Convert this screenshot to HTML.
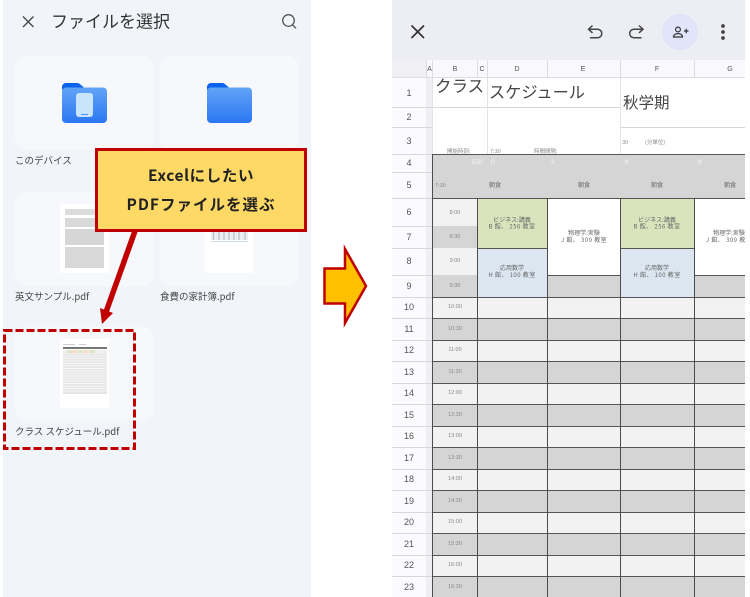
<!DOCTYPE html>
<html lang="ja">
<head>
<meta charset="utf-8">
<title>PDF to Excel</title>
<style>
html,body{margin:0;padding:0;background:#fff;width:750px;height:597px;overflow:hidden}
svg{display:block}
text{font-family:"Liberation Sans","Noto Sans CJK JP",sans-serif}
.j{font-family:"Noto Sans CJK JP","Liberation Sans",sans-serif}
.lb{font-size:9.5px;fill:#444;font-family:"Noto Sans CJK JP","Liberation Sans",sans-serif}
.rn{font-size:9px;fill:#555;text-anchor:middle}
.ch{font-size:7px;fill:#555;text-anchor:middle}
.t{font-size:5.5px;fill:#888;text-anchor:middle}
.c{font-size:6px;fill:#666;text-anchor:middle;font-family:"Noto Sans CJK JP","Liberation Sans",sans-serif}
.d{font-size:6px;fill:#666;text-anchor:middle;letter-spacing:.45px;font-family:"Noto Sans CJK JP","Liberation Sans",sans-serif}
.s{font-size:5.5px;fill:#888;font-family:"Noto Sans CJK JP","Liberation Sans",sans-serif}
</style>
</head>
<body>
<svg width="750" height="597" viewBox="0 0 750 597" xmlns="http://www.w3.org/2000/svg">
<defs>
<linearGradient id="fb" x1="0" y1="0" x2="0" y2="1"><stop offset="0" stop-color="#62a4f7"/><stop offset="1" stop-color="#2b77f2"/></linearGradient>
<clipPath id="sheet"><rect x="392" y="0" width="353" height="597"/></clipPath>
</defs>

<!-- LEFT PANEL -->
<rect x="3" y="0" width="308" height="597" fill="#f1f4f9"/>
<path d="M23 16.500L33.500 27M33.500 16.500L23 27" stroke="#444" stroke-width="1.300" fill="none"/>
<text x="51" y="27.500" class="j" font-size="17" fill="#333">ファイルを選択</text>
<circle cx="288.500" cy="20.500" r="5.800" stroke="#555" stroke-width="1.300" fill="none"/>
<path d="M292.800 25L296 28.300" stroke="#555" stroke-width="1.300"/>

<rect x="15" y="56" width="139" height="94" rx="11" fill="#f6f8fc"/>
<rect x="160" y="56" width="139" height="94" rx="11" fill="#f6f8fc"/>
<rect x="15" y="192" width="139" height="94" rx="11" fill="#f6f8fc"/>
<rect x="160" y="192" width="139" height="94" rx="11" fill="#f6f8fc"/>
<rect x="15" y="327" width="139" height="94" rx="11" fill="#f6f8fc"/>

<!-- folders -->
<path d="M62 87a4 4 0 0 1 4-4h11c2 0 3 1 4.500 2.500l2 1.500v3H62z" fill="#0b62ec"/>
<rect x="62" y="87.500" width="45" height="35.500" rx="4" fill="url(#fb)"/>
<rect x="76" y="93" width="17" height="24" rx="3" fill="#c9e4fd"/>
<rect x="81" y="114" width="7" height="1" fill="#4c8ff0"/>
<path d="M207 87a4 4 0 0 1 4-4h11c2 0 3 1 4.500 2.500l2 1.500v3H207z" fill="#0b62ec"/>
<rect x="207" y="87.500" width="45" height="35.500" rx="4" fill="url(#fb)"/>

<text x="15" y="164" class="lb">このデバイス</text>
<text x="15" y="300" class="lb">英文サンプル.pdf</text>
<text x="160" y="300" class="lb">食費の家計簿.pdf</text>
<text x="15" y="435" class="lb">クラス スケジュール.pdf</text>

<!-- thumb 1 -->
<rect x="60" y="204" width="49" height="69" fill="#fff"/>
<rect x="65" y="209" width="39" height="6" fill="#dcdcdc"/>
<rect x="65" y="218" width="39" height="9" fill="#d9d9d9"/>
<rect x="65" y="229" width="39" height="16" fill="#d6d6d6"/>
<rect x="65" y="247" width="39" height="21" fill="#d8d8d8"/>
<!-- thumb 2 -->
<rect x="205" y="225" width="48" height="48" fill="#fff"/>
<rect x="211" y="232" width="37" height="8" fill="#eceef0"/>
<path d="M213.500 232v8M219 232v8M224 232v8M229 232v8M234 232v8M239 232v8M245 232v8" stroke="#b8bec4" stroke-width="1.200"/>
<rect x="211" y="241" width="37" height="1" fill="#d0deea"/>
<!-- thumb 3 -->
<rect x="60" y="339" width="49" height="69" fill="#fff"/>
<rect x="63" y="344" width="12" height="1" fill="#ccc"/>
<rect x="79" y="344" width="7" height="1" fill="#ccc"/>
<rect x="63" y="347" width="44" height="2" fill="#777"/>
<rect x="63" y="350" width="44" height="4" fill="#f0f0f0"/>
<rect x="67" y="350" width="5" height="3" fill="#dbe7c6"/><rect x="72" y="350" width="5" height="3" fill="#f8dcc4"/><rect x="78" y="350" width="5" height="3" fill="#dbe7c6"/><rect x="84" y="350" width="5" height="3" fill="#f8dcc4"/><rect x="90" y="350" width="5" height="3" fill="#dbe7c6"/>
<rect x="63" y="354" width="44" height="40" fill="#e6e6e6"/>
<path d="M63 356h44M63 358.500h44M63 361h44M63 363.500h44M63 366h44M63 368.500h44M63 371h44M63 373.500h44M63 376h44M63 378.500h44M63 381h44M63 383.500h44M63 386h44M63 388.500h44M63 391h44" stroke="#f6f6f6" stroke-width="1"/>

<!-- RIGHT PANEL -->
<g clip-path="url(#sheet)">
<rect x="392" y="0" width="353" height="60" fill="#edeef4"/>
<rect x="392" y="60" width="353" height="18" fill="#f9f9fd"/>
<rect x="392" y="60" width="34" height="18" fill="#f0f0f4"/>
<rect x="392" y="78" width="34" height="519" fill="#fbfbfe"/>
<rect x="426" y="78" width="6" height="519" fill="#f0f0f2"/>
<rect x="432" y="78" width="313" height="76" fill="#fff"/>

<path d="M411.500 25.500L424 38M424 25.500L411.500 38" stroke="#333" stroke-width="1.700" fill="none"/>
<path d="M592.500 25.500l-4 3.700 4 3.700M588.500 29.200h9a4.300 4.300 0 0 1 0 8.600H590" stroke="#444" stroke-width="1.500" fill="none"/>
<path d="M639 25.500l4 3.700-4 3.700M643 29.200h-9a4.300 4.300 0 0 0 0 8.600h7.500" stroke="#444" stroke-width="1.500" fill="none"/>
<circle cx="680" cy="32" r="18" fill="#e1e4fa"/>
<circle cx="678" cy="29.500" r="2.400" stroke="#333" stroke-width="1.200" fill="none"/>
<path d="M673.500 37c0-2.200 2-3.400 4.500-3.400s4.500 1.200 4.500 3.400z" stroke="#333" stroke-width="1.200" fill="none"/>
<path d="M684 31h4.500M686.200 28.800v4.400" stroke="#333" stroke-width="1.200"/>
<circle cx="723" cy="26" r="1.900" fill="#444"/><circle cx="723" cy="32" r="1.900" fill="#444"/><circle cx="723" cy="38" r="1.900" fill="#444"/>

<!-- column headers -->
<path d="M426.500 60V78M432.500 60V78M477.500 60V78M487.500 60V78M547.500 60V78M620.500 60V78M694.500 60V78" stroke="#dcdce2" stroke-width="1"/>
<path d="M392 77.500H745" stroke="#dedee4" stroke-width="1"/>
<text x="429.500" y="71" class="ch">A</text><text x="455" y="71" class="ch">B</text><text x="482" y="71" class="ch">C</text><text x="517" y="71" class="ch">D</text><text x="583" y="71" class="ch">E</text><text x="657" y="71" class="ch">F</text><text x="730" y="71" class="ch">G</text>

<!-- light grid in top rows -->
<path d="M432 107.500H620M620 127.500H745M392 107.500H432M392 127.500H432M392 154.500H432M392 172.500H432M392 198.500H432M392 226.500H432M392 248.500H432M392 275.500H432M392 297.500H432M392 318.500H432M392 340.500H432M392 361.500H432M392 383.500H432M392 404.500H432M392 426.500H432M392 447.500H432M392 469.500H432M392 490.500H432M392 512.500H432M392 533.500H432M392 555.500H432M392 576.500H432" stroke="#d8d8dc" stroke-width="1"/>
<path d="M432.500 78V154M487.500 78V154M620.500 78V154" stroke="#e4e4e6" stroke-width="1"/>

<text x="435" y="92" class="j" font-size="16.500" fill="#444">クラス</text>
<text x="489" y="98" class="j" font-size="16.200" fill="#444">スケジュール</text>
<text x="623" y="108" class="j" font-size="15.500" fill="#444">秋学期</text>
<text x="447" y="153" class="s">開始時刻:</text>
<text x="490" y="153" class="s">7:30</text>
<text x="534" y="153" class="s">時間間隔:</text>
<text x="622" y="144" class="s">30</text>
<text x="645" y="144" class="s">(分単位)</text>

<!-- header band -->
<rect x="432" y="154" width="313" height="44" fill="#d5d5d5"/>
<text x="472" y="164" class="s" style="fill:#f4f4f4">時刻</text>
<text x="490" y="164" class="s" style="fill:#f4f4f4">月</text>
<text x="550" y="164" class="s" style="fill:#f4f4f4">火</text>
<text x="624" y="164" class="s" style="fill:#f4f4f4">水</text>
<text x="697" y="164" class="s" style="fill:#f4f4f4">木</text>
<text x="435" y="187" class="s">7:30</text>
<text x="495" y="187" class="c">朝食</text><text x="584" y="187" class="c">朝食</text><text x="657" y="187" class="c">朝食</text><text x="730" y="187" class="c">朝食</text>

<!-- body -->
<rect x="432" y="198" width="313" height="399" fill="#f2f2f2"/>
<rect x="432" y="226" width="45" height="22" fill="#d5d5d5"/>
<rect x="432" y="275" width="45" height="22" fill="#d5d5d5"/>
<rect x="477" y="198" width="70" height="50" fill="#d9e4bd"/>
<rect x="477" y="248" width="70" height="49" fill="#dce6f1"/>
<rect x="547" y="198" width="73" height="77" fill="#fff"/>
<rect x="547" y="275" width="73" height="22" fill="#d5d5d5"/>
<rect x="620" y="198" width="74" height="50" fill="#d9e4bd"/>
<rect x="620" y="248" width="74" height="49" fill="#dce6f1"/>
<rect x="694" y="198" width="51" height="77" fill="#fff"/>
<rect x="694" y="275" width="51" height="22" fill="#d5d5d5"/>
<rect x="432" y="318.500" width="313" height="21.500" fill="#d5d5d5"/>
<rect x="432" y="361.500" width="313" height="21.500" fill="#d5d5d5"/>
<rect x="432" y="404.500" width="313" height="21.500" fill="#d5d5d5"/>
<rect x="432" y="447.500" width="313" height="21.500" fill="#d5d5d5"/>
<rect x="432" y="490.500" width="313" height="21.500" fill="#d5d5d5"/>
<rect x="432" y="533.500" width="313" height="21.500" fill="#d5d5d5"/>
<rect x="432" y="576.500" width="313" height="21.500" fill="#d5d5d5"/>

<path d="M432 154.500H745M432 198.500H745M477 248.500H547M620 248.500H694M547 275.500H620M694 275.500H745M432 297.500H745M432 318.500H745M432 340.500H745M432 361.500H745M432 383.500H745M432 404.500H745M432 426.500H745M432 447.500H745M432 469.500H745M432 490.500H745M432 512.500H745M432 533.500H745M432 555.500H745M432 576.500H745" stroke="#555" stroke-width="1"/>
<path d="M432.500 154V597M477.500 198V597M547.500 198V597M620.500 198V597M694.500 198V597" stroke="#4d4d4d" stroke-width="1"/>

<text x="512" y="222" class="c">ビジネス:講義</text><text x="512" y="228.500" class="d">B 館、 256 教室</text>
<text x="584" y="235" class="c">物理学:実験</text><text x="584" y="242" class="d">J 館、 309 教室</text>
<text x="512" y="270" class="c">応用数学</text><text x="512" y="277" class="d">H 館、 100 教室</text>
<text x="657" y="222" class="c">ビジネス:講義</text><text x="657" y="228.500" class="d">B 館、 256 教室</text>
<text x="729" y="235" class="c">物理学:実験</text><text x="729" y="242" class="d">J 館、 309 教室</text>
<text x="657" y="270" class="c">応用数学</text><text x="657" y="277" class="d">H 館、 100 教室</text>

<text x="455" y="214" class="t">8:00</text><text x="455" y="238" class="t">8:30</text><text x="455" y="262" class="t">9:00</text><text x="455" y="287" class="t">9:30</text>
<text x="455" y="308" class="t">10:00</text><text x="455" y="330" class="t">10:30</text><text x="455" y="351" class="t">11:00</text><text x="455" y="373" class="t">11:30</text><text x="455" y="394" class="t">12:00</text><text x="455" y="416" class="t">12:30</text><text x="455" y="437" class="t">13:00</text><text x="455" y="459" class="t">13:30</text><text x="455" y="480" class="t">14:00</text><text x="455" y="502" class="t">14:30</text><text x="455" y="523" class="t">15:00</text><text x="455" y="545" class="t">15:30</text><text x="455" y="566" class="t">16:00</text><text x="455" y="588" class="t">16:30</text>

<text x="409" y="96" class="rn">1</text><text x="409" y="120" class="rn">2</text><text x="409" y="144" class="rn">3</text><text x="409" y="166" class="rn">4</text><text x="409" y="188" class="rn">5</text><text x="409" y="215" class="rn">6</text><text x="409" y="240" class="rn">7</text><text x="409" y="264" class="rn">8</text><text x="409" y="289" class="rn">9</text><text x="409" y="310" class="rn">10</text><text x="409" y="332" class="rn">11</text><text x="409" y="353" class="rn">12</text><text x="409" y="375" class="rn">13</text><text x="409" y="396" class="rn">14</text><text x="409" y="418" class="rn">15</text><text x="409" y="439" class="rn">16</text><text x="409" y="461" class="rn">17</text><text x="409" y="482" class="rn">18</text><text x="409" y="504" class="rn">19</text><text x="409" y="525" class="rn">20</text><text x="409" y="547" class="rn">21</text><text x="409" y="568" class="rn">22</text><text x="409" y="590" class="rn">23</text>
</g>

<!-- block arrow -->
<path d="M324.500 268.500H345V249L366 286 345 323V303.500H324.500z" fill="#ffc000" stroke="#c00000" stroke-width="2.500"/>

<!-- red arrow and dashed box -->
<rect x="4.500" y="330.500" width="130" height="118" fill="none" stroke="#c00000" stroke-width="3" stroke-dasharray="8 3"/>
<path d="M135 231L106 312" stroke="#c00000" stroke-width="5.500" fill="none"/>
<path d="M102 324L100 308 113 313z" fill="#c00000"/>

<!-- callout -->
<rect x="96.500" y="149.500" width="209" height="81" fill="#ffd966" stroke="#c00000" stroke-width="3"/>
<text x="201" y="181" class="j" font-size="15.500" font-weight="700" fill="#222" text-anchor="middle" letter-spacing=".6">Excelにしたい</text>
<text x="201" y="210" class="j" font-size="15.500" font-weight="700" fill="#222" text-anchor="middle" letter-spacing="1">PDFファイルを選ぶ</text>
</svg>
</body>
</html>
